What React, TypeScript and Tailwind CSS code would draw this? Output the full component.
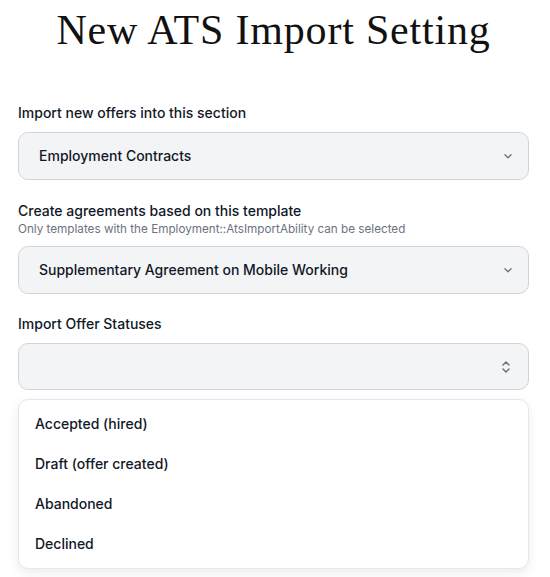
import React from 'react';

function ChevronDown() {
  return (
    <svg width="14" height="14" viewBox="0 0 16 16" fill="none" stroke="#6b7280" strokeWidth="1.5" strokeLinecap="round" strokeLinejoin="round">
      <path d="M4.5 6.5 8 10l3.5-3.5" />
    </svg>
  );
}

function ChevronUpDown() {
  return (
    <svg width="12" height="16" viewBox="0 0 12 16" fill="none" stroke="#6b7280" strokeWidth="1.5" strokeLinecap="round" strokeLinejoin="round">
      <path d="M3 6 6 3l3 3" />
      <path d="M3 10l3 3 3-3" />
    </svg>
  );
}

const statuses = ['Accepted (hired)', 'Draft (offer created)', 'Abandoned', 'Declined'];

export default function App() {
  return (
    <div className="min-h-[577px] bg-white pl-[18px] pr-[21px] text-[#111827]" style={{ fontFamily: 'Inter, "Noto Sans", sans-serif' }}>
      <h1 className="pt-[6px] text-center text-[42px] leading-[48px] tracking-[0.8px] text-[#111]" style={{ fontFamily: '"Liberation Serif", "DejaVu Serif", serif' }}>
        New ATS Import Setting
      </h1>

      <div className="mt-[49px]">
        <label className="block text-sm font-medium leading-5">Import new offers into this section</label>
        <button className="mt-[9px] flex h-[48px] w-full items-center justify-between rounded-[10px] border border-[#d1d5db] bg-[#f3f4f6] pl-[20px] pr-[13px] text-left">
          <span className="text-sm font-medium">Employment Contracts</span>
          <ChevronDown />
        </button>
      </div>

      <div className="mt-[21px]">
        <label className="block text-sm font-medium leading-5">Create agreements based on this template</label>
        <p className="text-[11.7px] leading-4 text-[#6b7280]">Only templates with the Employment::AtsImportAbility can be selected</p>
        <button className="mt-[9px] flex h-[48px] w-full items-center justify-between rounded-[10px] border border-[#d1d5db] bg-[#f3f4f6] pl-[20px] pr-[13px] text-left">
          <span className="text-sm font-medium">Supplementary Agreement on Mobile Working</span>
          <ChevronDown />
        </button>
      </div>

      <div className="mt-[20px]">
        <label className="block text-sm font-medium leading-5">Import Offer Statuses</label>
        <button className="mt-[9px] flex h-[47px] w-full items-center justify-end rounded-[10px] border border-[#d1d5db] bg-[#f3f4f6] pl-[20px] pr-[16px]">
          <ChevronUpDown />
        </button>
        <ul className="mt-[9px] rounded-[10px] border border-[#e5e7eb] bg-white py-[4px] shadow-[0_4px_12px_rgba(0,0,0,0.08)]">
          {statuses.map(s => (
            <li key={s} className="flex h-[40px] items-center px-[16px] text-sm font-medium">
              {s}
            </li>
          ))}
        </ul>
      </div>
    </div>
  );
}
